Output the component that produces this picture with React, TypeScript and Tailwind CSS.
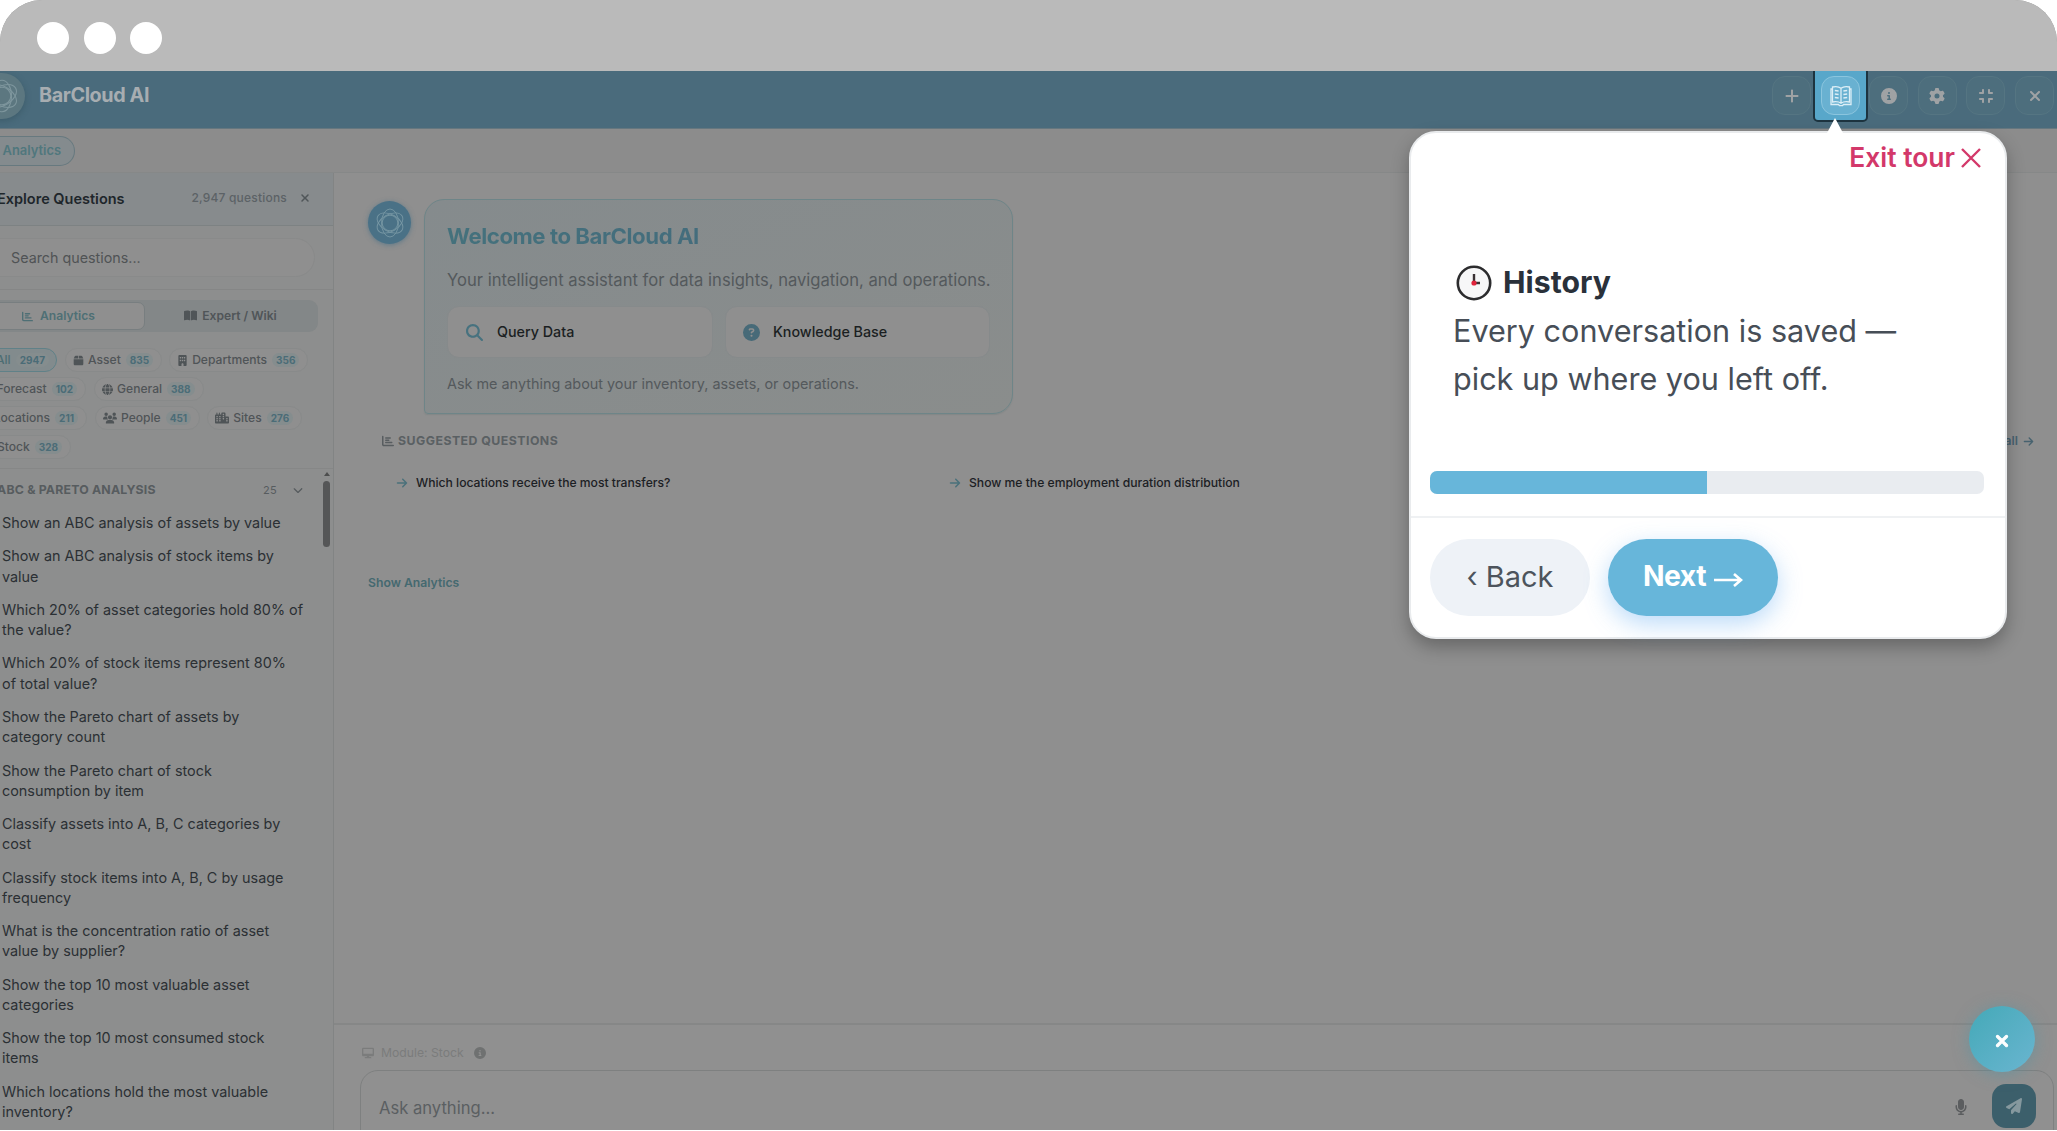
import type { ReactNode } from 'react';
import {
  FaArrowRight,
  FaBookOpen,
  FaBox,
  FaBuilding,
  FaChartBar,
  FaChevronDown,
  FaCircleInfo,
  FaCircleQuestion,
  FaCity,
  FaCompress,
  FaDesktop,
  FaGear,
  FaGlobe,
  FaMagnifyingGlass,
  FaMicrophone,
  FaPaperPlane,
  FaPlus,
  FaUsers,
  FaXmark,
} from 'react-icons/fa6';

const questions = [
  ['Show an ABC analysis of assets by value'],
  ['Show an ABC analysis of stock items by', 'value'],
  ['Which 20% of asset categories hold 80% of', 'the value?'],
  ['Which 20% of stock items represent 80%', 'of total value?'],
  ['Show the Pareto chart of assets by', 'category count'],
  ['Show the Pareto chart of stock', 'consumption by item'],
  ['Classify assets into A, B, C categories by', 'cost'],
  ['Classify stock items into A, B, C by usage', 'frequency'],
  ['What is the concentration ratio of asset', 'value by supplier?'],
  ['Show the top 10 most valuable asset', 'categories'],
  ['Show the top 10 most consumed stock', 'items'],
  ['Which locations hold the most valuable', 'inventory?'],
];

export default function App() {
  return (
    <div className="relative h-[1131px] w-[2057px] overflow-hidden bg-white font-['Inter',sans-serif]">
      <div className="flex h-[1130px] flex-col overflow-hidden rounded-t-[42px] bg-[#8f8f8f]">
        <div className="flex h-[71px] shrink-0 items-start gap-[14.5px] bg-[#bababa] pl-[37px] pt-[22px]">
          <span className="size-8 rounded-full bg-white" />
          <span className="size-8 rounded-full bg-white" />
          <span className="size-8 rounded-full bg-white" />
        </div>
        <Header />
        <div className="flex h-11 shrink-0 items-center border-b border-[#868888] bg-[#8c8c8c]">
          <span className="flex h-[30px] w-[75px] items-center justify-end rounded-r-full border border-l-0 border-[#67797f] bg-[#848b8e] pr-[13px] text-[12.9px] font-semibold text-[#50777d]">
            Analytics
          </span>
        </div>
        <div className="flex min-h-0 flex-1">
          <Sidebar />
          <Main />
        </div>
      </div>
      <TourCard />
      <div className="absolute left-[1969px] top-[1006px] flex size-[66px] items-center justify-center rounded-full bg-linear-to-br from-[#43a9b8] to-[#69b5d0] shadow-[0_2px_16px_rgba(80,150,165,0.55)]">
        <FaXmark className="mt-1 size-[18px] stroke-white stroke-[30] text-white" />
      </div>
    </div>
  );
}

function Header() {
  return (
    <header className="relative flex h-[58px] shrink-0 items-start overflow-hidden border-b border-[#66777f] bg-[#4a6b7c]">
      <div className="-ml-[21px] mt-0.5 flex size-[46px] shrink-0 items-center justify-center rounded-full bg-[#5c7780] text-[#7e969d] shadow-[0_2px_6px_rgba(40,70,80,0.4)]">
        <Atom className="size-9" />
      </div>
      <h1 className="ml-3.5 mt-[9px] text-[19.8px] font-bold leading-[30px] tracking-[-0.4px] text-[#a7adb1]">BarCloud AI</h1>
      <div className="ml-auto mr-[3px] mt-[5px] flex gap-[9.6px] text-[#9fa2a4]">
        <HeaderButton><FaPlus className="size-[16px]" /></HeaderButton>
        <HeaderButton><span /></HeaderButton>
        <HeaderButton><FaCircleInfo className="size-4" /></HeaderButton>
        <HeaderButton><FaGear className="size-4" /></HeaderButton>
        <HeaderButton><FaCompress className="size-4" /></HeaderButton>
        <HeaderButton><FaXmark className="size-4" /></HeaderButton>
      </div>
      <div className="absolute -top-1 left-[1813px] flex h-[55px] w-[55px] items-center justify-center rounded-[5px] border-2 border-[#1d3440] bg-[#58a7ca] pt-0.5">
        <div className="flex size-[39px] items-center justify-center rounded-[13px] border border-[#8bc5de] bg-[#69b1d1]">
          <Book />
        </div>
      </div>
    </header>
  );
}

function HeaderButton({ children }: { children: ReactNode }) {
  return (
    <span className="flex size-[39px] items-center justify-center rounded-[13px] border border-[#557582] bg-[#4d6e7d]">
      {children}
    </span>
  );
}

function Sidebar() {
  return (
    <aside className="flex w-[334px] shrink-0 flex-col overflow-hidden border-r border-[#828484] bg-[#8d8e8e]">
      <div className="flex h-[53px] shrink-0 items-center border-b border-[#7d8283] bg-[#878b8d]">
        <h2 className="-ml-[3px] whitespace-nowrap text-[14.5px] font-semibold text-[#1e262b]">Explore Questions</h2>
        <span className="mb-0.5 ml-auto mr-[12px] text-[12px] font-medium tracking-[0.2px] text-[#5c6266]">2,947 questions</span>
        <FaXmark className="mb-0.5 mr-[22px] size-3 text-[#505659]" />
      </div>
      <div className="h-16 shrink-0 border-b border-[#858686] pt-3">
        <div className="-ml-5 flex h-[39px] w-[335px] items-center rounded-full border border-[#898a8a] bg-[#8f8f8f] pl-[30px] text-[14.3px] text-[#505355]">
          Search questions...
        </div>
      </div>
      <div className="h-[179px] shrink-0 border-b border-[#868787]">
        <div className="-ml-5 mt-2.5 flex h-[32px] w-[338px] items-center rounded-[9px] bg-[#838788] p-0.5 text-[12.1px] font-semibold">
          <div className="flex h-[28px] w-[163px] items-center justify-center gap-[7px] rounded-[7px] border border-[#787e80] bg-[#8f8f8f] pr-[10px] text-[#4e6f75]">
            <FaChartBar className="size-[11px]" />
            Analytics
          </div>
          <div className="flex flex-1 items-center justify-center gap-[5px] text-[#505558]">
            <FaBookOpen className="size-[13px]" />
            Expert / Wiki
          </div>
        </div>
        <div className="mt-4 flex flex-col gap-[5px]">
          <div className="flex">
            <FirstPill className="w-[57px]"><Pill active label="All" count={2947} /></FirstPill>
            <Pill icon={<FaBox className="size-[11px]" />} label="Asset" count={835} />
            <Pill icon={<FaBuilding className="size-[11px]" />} label="Departments" count={356} />
          </div>
          <div className="flex">
            <FirstPill className="w-[86px]"><Pill label="Forecast" count={102} /></FirstPill>
            <Pill icon={<FaGlobe className="size-[11px]" />} label="General" count={388} />
          </div>
          <div className="flex">
            <FirstPill className="w-[87px]"><Pill label="Locations" count={211} /></FirstPill>
            <Pill icon={<FaUsers className="size-[14px]" />} label="People" count={451} />
            <Pill icon={<FaCity className="size-[14px]" />} label="Sites" count={276} />
          </div>
          <div className="flex">
            <FirstPill className="w-[71px]"><Pill label="Stock" count={328} /></FirstPill>
          </div>
        </div>
      </div>
      <div className="relative min-h-0 flex-1">
        <div className="flex h-[42px] items-center text-[#575c5f]">
          <h3 className="-ml-[3px] whitespace-nowrap text-[12.3px] font-bold tracking-[0.2px]">ABC &amp; PARETO ANALYSIS</h3>
          <span className="ml-auto mr-[16px] text-[11px] tracking-[0.3px]">25</span>
          <FaChevronDown className="mr-[30px] size-[10px]" />
        </div>
        <ul className="pl-[2px] pt-[2px]">
          {questions.map(lines => (
            <li key={lines[0]} className="mb-[13.15px] whitespace-nowrap text-[14.4px] leading-[20.2px] text-[#2b3034]">
              {lines.map(line => (
                <div key={line}>{line}</div>
              ))}
            </li>
          ))}
        </ul>
        <div className="absolute right-[3px] top-[3px] flex w-[7px] flex-col items-center">
          <span className="border-x-[3.5px] border-b-[4px] border-x-transparent border-b-[#4d4e4e]" />
          <span className="mt-[5px] h-[66px] w-[7px] rounded-full bg-[#555657]" />
        </div>
      </div>
    </aside>
  );
}

function FirstPill({ className, children }: { className: string; children: ReactNode }) {
  return <div className={`mr-2 flex shrink-0 justify-end ${className}`}>{children}</div>;
}

type PillProps = { icon?: ReactNode; label: string; count: number; active?: boolean };

function Pill({ icon, label, count, active }: PillProps) {
  return (
    <span
      className={`mr-[7px] flex h-6 shrink-0 items-center rounded-full border pl-[7px] text-[12.1px] font-medium last:mr-0 ${
        active ? 'border-[#608188] bg-[#828b8d] pr-[7px] text-[#4c6d73]' : 'border-[#888a8a] bg-[#8f8f8f] pr-[8px] text-[#4f5457]'
      }`}
    >
      {icon}
      <span className={icon ? 'ml-[4px]' : ''}>{label}</span>
      <span className="ml-[5px] rounded-full bg-[#858d8e] px-[4px] text-[10px] font-bold leading-[14px] text-[#4b6c77]">{count}</span>
    </span>
  );
}

function Main() {
  return (
    <main className="flex min-w-0 flex-1 flex-col">
      <div className="h-[852px] shrink-0 border-b-2 border-[#868787] pl-[34px] pt-[26px]">
        <div className="flex items-start gap-[13px]">
          <div className="mt-[2px] flex size-[43px] items-center justify-center rounded-full bg-[#4a7186] text-[#7797a4] shadow-[0_1px_5px_rgba(74,113,134,0.7)]">
            <Atom className="size-8" />
          </div>
          <div className="flex h-[215px] w-[589px] flex-col rounded-[20px] rounded-bl-[4px] border border-[#6e8588] bg-linear-to-br from-[#858b8d] to-[#8a8d8c] px-[22px] shadow-[0_1px_1px_rgba(90,110,110,0.25)]">
            <h2 className="mt-[20px] bg-linear-to-r from-[#44717c] to-[#44687d] bg-clip-text text-[22.2px] font-bold leading-8 tracking-[-0.45px] text-transparent">
              Welcome to BarCloud AI
            </h2>
            <p className="mt-[14px] whitespace-nowrap text-[16.6px] leading-7 text-[#54595c]">
              Your intelligent assistant for data insights, navigation, and operations.
            </p>
            <div className="mt-3 flex gap-3 text-[14.3px] font-medium text-[#1b1f22]">
              <div className="flex h-[52px] flex-1 items-center gap-[14px] rounded-xl border border-[#868a8b] bg-[#8f8f8f] pl-[18px]">
                <FaMagnifyingGlass className="size-[17px] text-[#47727f]" />
                Query Data
              </div>
              <div className="flex h-[52px] flex-1 items-center gap-[13px] rounded-xl border border-[#868a8b] bg-[#8f8f8f] pl-[17px]">
                <FaCircleQuestion className="size-[17px] text-[#476a78]" />
                Knowledge Base
              </div>
            </div>
            <p className="mt-[15px] text-[14.4px] leading-[22px] text-[#54595c]">
              Ask me anything about your inventory, assets, or operations.
            </p>
          </div>
        </div>
        <div className="mt-[18px] flex h-[18px] items-center pl-[14px]">
          <FaChartBar className="mr-1 size-3 text-[#585d60]" />
          <h3 className="text-[12.3px] font-bold tracking-[0.48px] text-[#5a6063]">SUGGESTED QUESTIONS</h3>
          <a className="ml-auto mr-[23px] flex items-center gap-[5px] text-[12.2px] font-semibold text-[#47626f]">
            View all
            <FaArrowRight className="size-[11px]" />
          </a>
        </div>
        <div className="mt-[23px] flex h-5 pl-7 text-[12.15px] font-medium text-[#1c2024]">
          <Suggestion className="w-[553px]">Which locations receive the most transfers?</Suggestion>
          <Suggestion className="w-[553px]">Show me the employment duration distribution</Suggestion>
        </div>
        <div className="mt-20 text-[12.2px] font-semibold leading-5 text-[#456970]">Show Analytics</div>
      </div>
      <div className="flex-1 overflow-hidden bg-[#909090] pl-[26px] pt-5">
        <div className="flex h-4 items-center pl-0.5 text-[12.2px] text-[#7b7c7c]">
          <FaDesktop className="mr-[7px] size-3" />
          Module: Stock
          <FaCircleInfo className="ml-[10px] size-3 text-[#6f7171]" />
        </div>
        <div className="mt-[9px] flex h-20 w-[1694px] items-start rounded-[18px] border border-[#7e8080] pl-[18px] pt-[13px]">
          <span className="pt-3 text-[16.6px] leading-6 text-[#5b5f62]">Ask anything...</span>
          <FaMicrophone className="ml-auto mr-[23px] mt-[15px] size-4 text-[#5b5d5f]" />
          <span className="mr-[17px] flex size-11 items-center justify-center rounded-[14px] bg-[#3c5f6b]">
            <FaPaperPlane className="size-4 text-[#85989e]" />
          </span>
        </div>
      </div>
    </main>
  );
}

function Suggestion({ className, children }: { className: string; children: ReactNode }) {
  return (
    <div className={`flex items-center gap-2 whitespace-nowrap ${className}`}>
      <FaArrowRight className="size-3 text-[#4b717b]" />
      {children}
    </div>
  );
}

function TourCard() {
  return (
    <div className="absolute left-[1409px] top-[131px] flex h-[508px] w-[598px] flex-col rounded-[27px] border-2 border-[#e9ebed] bg-white shadow-[0_8px_18px_rgba(0,0,0,0.28)]">
      <span className="absolute -top-[15px] left-[416px] border-x-8 border-b-[15px] border-x-transparent border-b-white" />
      <button className="mr-[24px] mt-[9px] flex h-8 items-center gap-[6px] self-end text-[26.4px] font-semibold text-[#d3386a]">
        Exit tour
        <svg viewBox="0 0 20 20" className="size-5 fill-none stroke-current stroke-[2.4]">
          <path d="M1 1 19 19M19 1 1 19" />
        </svg>
      </button>
      <div className="mt-[85px] pl-[42px]">
        <h2 className="flex h-12 items-center gap-[11px] pl-[3px] text-[30.2px] font-bold text-[#2a313a]">
          <Clock />
          History
        </h2>
        <p className="whitespace-nowrap text-[30.6px] leading-[48px] text-[#474e57]">
          Every conversation is saved —<br />
          pick up where you left off.
        </p>
      </div>
      <div className="ml-[19px] mt-[68px] h-[23px] w-[554px] overflow-hidden rounded-[7px] bg-[#e9ecf0]">
        <div className="h-full w-1/2 bg-[#67b6da]" />
      </div>
      <div className="mt-[22px] flex gap-[18px] border-t-2 border-[#eff1f3] pl-[19px] pt-[21px]">
        <button className="flex h-[77px] w-[160px] items-center justify-center rounded-full bg-[#eef2f7] pb-0.5 text-[29px] text-[#4d545c]">
          ‹ Back
        </button>
        <button className="flex h-[77px] w-[170px] items-center justify-center gap-2 rounded-full bg-[#67b6da] pb-0.5 text-[28.3px] font-bold tracking-[-0.5px] text-white shadow-[0_8px_24px_rgba(80,160,240,0.38)]">
          Next
          <svg viewBox="0 0 29 18" className="mt-1.5 h-[18px] w-[29px] fill-none stroke-current stroke-[2.6]">
            <path d="M0 9h26M20 3l7 6-7 6" />
          </svg>
        </button>
      </div>
    </div>
  );
}

function Clock() {
  return (
    <svg viewBox="0 0 36 36" className="size-9 fill-none">
      <circle cx="18" cy="18" r="16.2" fill="#f7f7f8" stroke="#2c2c2e" strokeWidth="2.6" />
      <path d="M18 9v9h6" stroke="#3a3234" strokeWidth="2.4" />
      <circle cx="18" cy="18" r="2.6" fill="#e0243c" />
    </svg>
  );
}

function Book() {
  return (
    <svg viewBox="0 0 22 22" className="size-[22px] fill-none stroke-[#dceef6] stroke-[1.3]">
      <path d="M11 3.2C9 1.6 5 1.4 2.5 2v15c3-.5 6.5-.2 8.5 1.2C13 16.8 16.5 16.5 19.5 17V2C17 1.4 13 1.6 11 3.2ZM11 3.2v15" />
      <path d="M2.5 4H1v15.500h7.500l1 1.200h3l1-1.200H21V4h-1.500M4.800 5.500l3.800.5M4.800 9l3.800.5M4.800 12.500l3.800.5M13.400 6l3.800-.5M13.400 9.500l3.800-.5M13.400 13l3.800-.5" />
    </svg>
  );
}

function Atom({ className }: { className: string }) {
  return (
    <svg viewBox="0 0 32 32" className={`fill-none stroke-current stroke-[0.9] ${className}`}>
      <ellipse cx="16" cy="16" rx="8.5" ry="14" />
      <ellipse cx="16" cy="16" rx="8.5" ry="14" transform="rotate(60 16 16)" />
      <ellipse cx="16" cy="16" rx="8.5" ry="14" transform="rotate(120 16 16)" />
      <circle cx="16" cy="16" r="7.8" />
    </svg>
  );
}
